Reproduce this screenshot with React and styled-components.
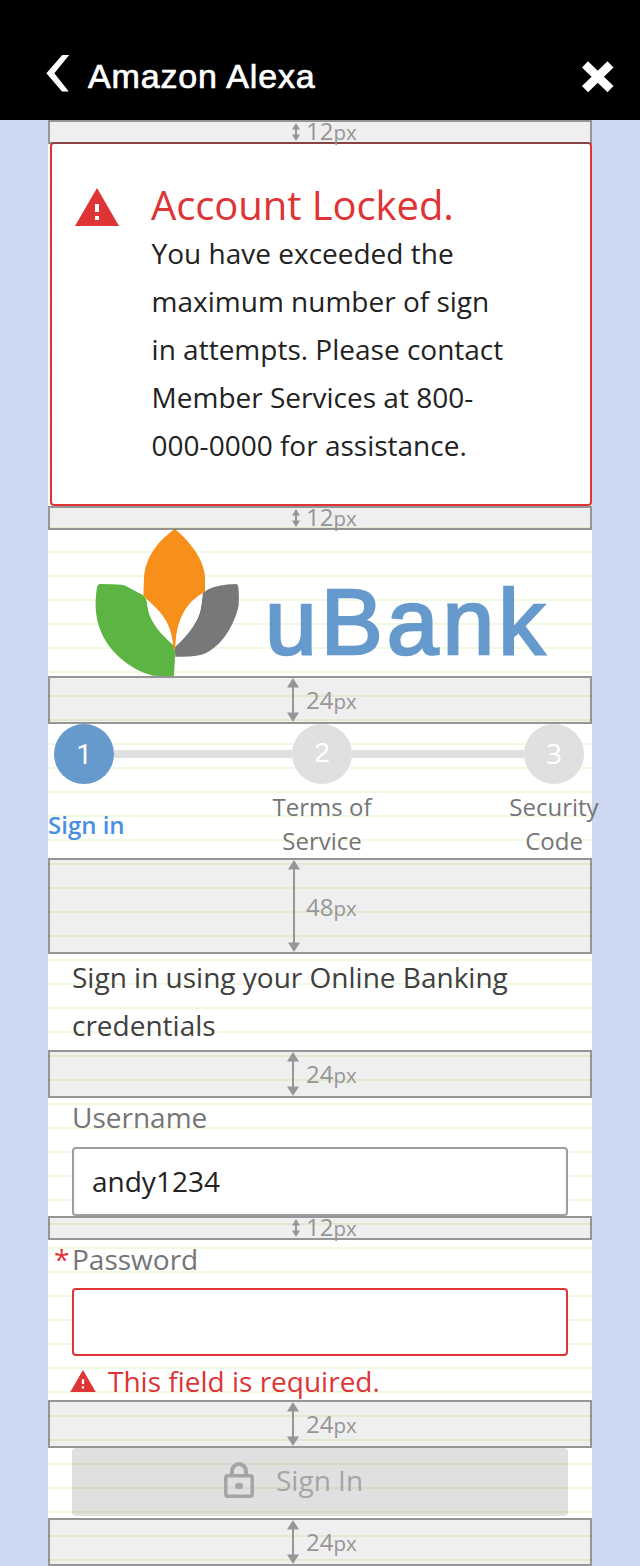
import React from 'react';
import styled, { createGlobalStyle } from 'styled-components';

const GlobalStyle = createGlobalStyle`
  * { box-sizing: border-box; }
  body {
    margin: 0;
    background: #cdd9f0;
    font-family: 'Open Sans', 'Noto Sans', sans-serif;
  }
`;

const Page = styled.div`
  display: flex;
  flex-direction: column;
  width: 640px;
  height: 1566px;
  overflow: hidden;
  background: #cdd9f0;
`;

const Header = styled.header`
  flex: none;
  display: flex;
  align-items: flex-start;
  height: 120px;
  padding: 55px 26px 0 46px;
  background: #000;
  color: #fff;
`;

const BackIcon = styled.svg`
  flex: none;
  width: 24px;
  height: 37px;
`;

const CloseIcon = styled.svg`
  flex: none;
  width: 33px;
  height: 32px;
  margin-top: 6px;
`;

const HeaderTitle = styled.h1`
  flex: 1;
  margin: 1px 0 0 18px;
  font: 400 34px/40px 'Liberation Sans', Arial, sans-serif;
  letter-spacing: 0.85px;
  -webkit-text-stroke: 0.7px #fff;
`;

const Column = styled.main`
  flex: none;
  display: flex;
  flex-direction: column;
  width: 544px;
  height: 1446px;
  margin: 0 auto;
  background-color: #fff;
  background-image: linear-gradient(#effae2 2px, transparent 2px);
  background-size: 100% 24px;
  background-position: 0 23px;
`;

const SpacerBox = styled.div`
  position: relative;
  z-index: 1;
  flex: none;
  display: flex;
  align-items: center;
  height: ${(p) => p.$size * 2}px;
  border: 2px solid rgba(80, 80, 80, 0.6);
  background: rgba(0, 0, 0, 0.063);
  background-clip: padding-box;
  color: #969696;
`;

const ArrowSlot = styled.div`
  flex: none;
  display: flex;
  width: 256px;
  padding-left: ${(p) => p.$left}px;
`;

const SpacerArrow = styled.svg`
  flex: none;
  width: ${(p) => p.$w}px;
  height: ${(p) => p.$h}px;
`;

const SpacerLabel = styled.span`
  margin-top: ${(p) => p.$shift}px;
  font-size: 24px;
  line-height: 20px;
  white-space: nowrap;

  small {
    font-size: 20.5px;
  }
`;

const Alert = styled.section`
  flex: none;
  display: flex;
  align-items: flex-start;
  height: 364px;
  margin: -2px 0 0 2px;
  padding: 37px 60px 0 23px;
  border: 2px solid #de3435;
  border-radius: 4px;
  background: #fff;
`;

const AlertIcon = styled.svg`
  flex: none;
  width: 44px;
  height: 38px;
  margin: 7px 32px 0 0;
`;

const AlertTitle = styled.h2`
  margin: 0;
  color: #de3435;
  font-size: 40px;
  font-weight: 400;
  letter-spacing: -0.08px;
  line-height: 48px;
  white-space: nowrap;
`;

const AlertText = styled.p`
  margin: 0;
  padding-left: 0.6px;
  color: #222;
  font-size: 28px;
  line-height: 48px;
  white-space: nowrap;
`;

const Brand = styled.div`
  flex: none;
  display: flex;
  height: 146px;
  padding-left: 45px;
`;

const BrandMark = styled.svg`
  flex: none;
  width: 147px;
  height: 148px;
  margin-top: -1px;
  overflow: visible;
`;

const BrandName = styled.span`
  margin: 37px 0 0 25px;
  color: #6699cc;
  font: 400 93px/110px 'Liberation Sans', Arial, sans-serif;
  letter-spacing: 4px;
  -webkit-text-stroke: 2.6px #6699cc;
  white-space: nowrap;
`;

const Stepper = styled.div`
  flex: none;
  height: 134px;
`;

const Track = styled.div`
  display: flex;
  align-items: center;
  padding: 0 8px 0 6px;
`;

const StepDot = styled.div`
  flex: none;
  width: 60px;
  height: 60px;
  border-radius: 50%;
  background: ${(p) => (p.$active ? '#6699cc' : '#e0e0e0')};
  color: #fff;
  font: 400 28px/${(p) => p.$line || 60}px ${(p) => p.$font || "'Liberation Sans', Arial, sans-serif"};
  text-align: center;
`;

const StepBar = styled.div`
  flex: none;
  width: ${(p) => p.$w}px;
  height: 8px;
  background: #e0e0e0;
`;

const StepLabels = styled.div`
  display: flex;
  margin-top: 6px;
`;

const StepLabel = styled.div`
  flex: none;
  width: ${(p) => p.$w}px;
  padding-top: ${(p) => (p.$active ? 18 : 0)}px;
  color: ${(p) => (p.$active ? '#4a90e2' : '#757575')};
  font-size: 24px;
  font-weight: ${(p) => (p.$active ? 600 : 400)};
  line-height: 34px;
  text-align: ${(p) => (p.$active ? 'left' : 'center')};
`;

const Intro = styled.p`
  flex: none;
  height: 97px;
  margin: -1px 0 0;
  padding-left: 24px;
  color: #404040;
  font-size: 28px;
  line-height: 48px;
`;

const Field = styled.div`
  flex: none;
  height: ${(p) => p.$h}px;
  padding: 0 24px;
`;

const Label = styled.label`
  display: block;
  height: ${(p) => p.$h}px;
  margin-left: ${(p) => (p.$required ? -18 : 0)}px;
  color: #757575;
  font-size: 28px;
  line-height: 38px;
`;

const Asterisk = styled.span`
  display: inline-block;
  width: 18px;
  color: #de3435;
`;

const Input = styled.input`
  display: block;
  width: 496px;
  height: ${(p) => p.$h}px;
  padding: 0 18px 2px;
  border: 2px solid ${(p) => (p.$invalid ? '#de3435' : '#9e9e9e')};
  border-radius: 4px;
  background: #fff;
  color: #222;
  font: 400 28px 'Open Sans', 'Noto Sans', sans-serif;
  outline: none;
`;

const FieldError = styled.div`
  display: flex;
  align-items: center;
  margin: 6px 0 0 -2px;
  color: #de3435;
  font-size: 28px;
  line-height: 38px;
`;

const ErrorIcon = styled.svg`
  flex: none;
  width: 26px;
  height: 22px;
  margin-right: 12px;
`;

const SignInButton = styled.button`
  flex: none;
  display: flex;
  align-items: center;
  width: 496px;
  height: 68px;
  margin: 0 0 2px 24px;
  padding: 0 0 4px 152px;
  border: 0;
  border-radius: 4px;
  background: rgba(0, 0, 0, 0.122);
  color: #a5a5a5;
  font: 400 28px/38px 'Open Sans', 'Noto Sans', sans-serif;
`;

const LockIcon = styled.svg`
  flex: none;
  width: 30px;
  height: 36px;
  margin-right: 22px;
`;

const WARNING_PATH = 'M0 19h22L11 0 0 19zm12-3h-2v-2h2v2zm0-4h-2V8h2v4z';

const ARROWS = {
  12: { w: 8, h: 18, left: 242, tip: 6.5, shift: -2 },
  24: { w: 12, h: 44, left: 237, tip: 9.5, shift: 1 },
  48: { w: 12, h: 92, left: 238, tip: 9.5, shift: 2 },
};

function Spacer({ size }) {
  const { w, h, left, tip, shift } = ARROWS[size];
  return (
    <SpacerBox $size={size}>
      <ArrowSlot $left={left}>
        <SpacerArrow $w={w} $h={h} viewBox={`0 0 ${w} ${h}`} fill="#969696">
          <path d={`M${w / 2} 0L${w} ${tip}H0z`} />
          <path d={`M${w / 2} ${h}L${w} ${h - tip}H0z`} />
          <rect x={w / 2 - 1} y={tip - 1} width="2" height={h - tip * 2 + 2} />
        </SpacerArrow>
      </ArrowSlot>
      <SpacerLabel $shift={shift}>
        {size}
        <small>px</small>
      </SpacerLabel>
    </SpacerBox>
  );
}

export default function App() {
  return (
    <>
      <GlobalStyle />
      <Page>
        <Header>
          <BackIcon viewBox="0 0 24 37" fill="#fff">
            <path d="M16.2 0H23.2L8.3 18.3 22.8 36.5H16L0.4 18.3z" />
          </BackIcon>
          <HeaderTitle>Amazon Alexa</HeaderTitle>
          <CloseIcon viewBox="0 0 33 32" fill="none" stroke="#fff" strokeWidth="8.6">
            <path d="M4 3.300L29.500 28.200M29.500 3.300L4 28.200" />
          </CloseIcon>
        </Header>
        <Column>
          <Spacer size={12} />
          <Alert>
            <AlertIcon viewBox="0 0 22 19" fill="#de3435">
              <path d={WARNING_PATH} />
            </AlertIcon>
            <div>
              <AlertTitle>Account Locked.</AlertTitle>
              <AlertText>
                You have exceeded the
                <br />
                maximum number of sign
                <br />
                in attempts. Please contact
                <br />
                Member Services at 800-
                <br />
                000-0000 for assistance.
              </AlertText>
            </div>
          </Alert>
          <Spacer size={12} />
          <Brand>
            <BrandMark viewBox="159 117 441 444">
              <path
                fill="#5cb543"
                d="M171 290Q173 282 180 282L218 283Q250 283 262 290L308 315 319 328 325 362C335 400 362 432 404 468L405 500 402 554Q402 559 396 559L340 557C262 538 207 480 185 430C166 385 163 345 171 290z"
              />
              <path
                fill="#77787a"
                d="M488 309L505 298Q530 284 588 282Q594 282 595 290Q598 315 596 345C588 390 555 460 500 488Q475 502 406 500L404 472C440 440 466 405 478 372Q485 350 488 309z"
              />
              <path
                fill="#fff"
                d="M319 328L325 362C335 400 362 432 404 468C440 440 466 405 478 372Q485 350 488 309z"
              />
              <path
                fill="#f7901b"
                d="M404 117C440 145 494 205 495 263L495 305C440 335 407 385 406 478L401 478C394 400 374 375 310 318L312 262C317 200 354 153 404 117z"
              />
            </BrandMark>
            <BrandName>uBank</BrandName>
          </Brand>
          <Spacer size={24} />
          <Stepper>
            <Track>
              <StepDot $active $font="Roboto, Arial, sans-serif" $line={61}>
                1
              </StepDot>
              <StepBar $w={178} />
              <StepDot $line={58}>2</StepDot>
              <StepBar $w={172} />
              <StepDot $font="'Open Sans', sans-serif" $line={58}>
                3
              </StepDot>
            </Track>
            <StepLabels>
              <StepLabel $active $w={100}>
                Sign in
              </StepLabel>
              <StepLabel $w={348}>
                Terms of
                <br />
                Service
              </StepLabel>
              <StepLabel $w={116}>
                Security
                <br />
                Code
              </StepLabel>
            </StepLabels>
          </Stepper>
          <Spacer size={48} />
          <Intro>
            Sign in using your Online Banking
            <br />
            credentials
          </Intro>
          <Spacer size={24} />
          <Field $h={118}>
            <Label htmlFor="username" $h={49}>
              Username
            </Label>
            <Input id="username" defaultValue="andy1234" $h={69} />
          </Field>
          <Spacer size={12} />
          <Field $h={160}>
            <Label htmlFor="password" $h={48} $required>
              <Asterisk>*</Asterisk>
              Password
            </Label>
            <Input id="password" type="password" $h={68} $invalid />
            <FieldError>
              <ErrorIcon viewBox="0 0 22 19" fill="#de3435">
                <path d={WARNING_PATH} />
              </ErrorIcon>
              This field is required.
            </FieldError>
          </Field>
          <Spacer size={24} />
          <SignInButton>
            <LockIcon viewBox="0 0 30 36" fill="none" stroke="#a5a5a5">
              <path strokeWidth="4" d="M8 13V9.500A7 7.500 0 0 1 22 9.500V13" />
              <rect x="1.8" y="13.7" width="26.400" height="20.600" rx="2" strokeWidth="3.500" />
              <ellipse cx="15" cy="24" rx="4" ry="3.300" fill="#a5a5a5" stroke="none" />
            </LockIcon>
            Sign In
          </SignInButton>
          <Spacer size={24} />
        </Column>
      </Page>
    </>
  );
}
